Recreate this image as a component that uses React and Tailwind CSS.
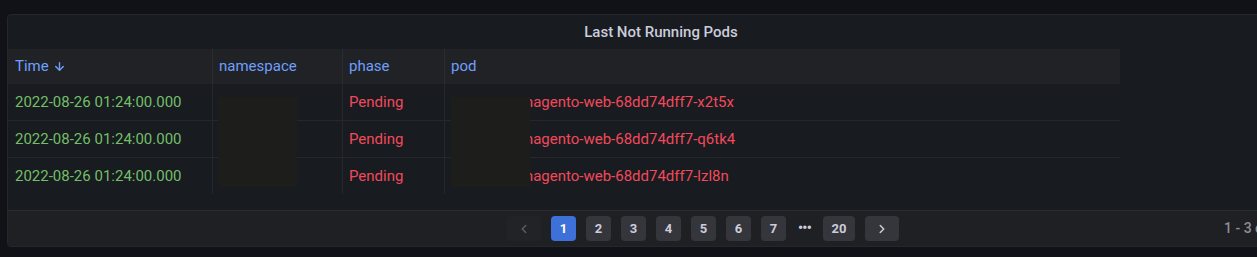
import { ArrowDown, ChevronLeft, ChevronRight } from 'lucide-react';

const rows = [
  { time: '2022-08-26 01:24:00.000', phase: 'Pending', pod: 'magento-web-68dd74dff7-x2t5x' },
  { time: '2022-08-26 01:24:00.000', phase: 'Pending', pod: 'magento-web-68dd74dff7-q6tk4' },
  { time: '2022-08-26 01:24:00.000', phase: 'Pending', pod: 'magento-web-68dd74dff7-lzl8n' },
];

const pages = ['1', '2', '3', '4', '5', '6', '7'];

function PageButton({ label, active }) {
  return (
    <div
      className={
        active
          ? 'flex h-[25px] w-[25px] items-center justify-center rounded-sm bg-[#3d71d9] text-[13px] font-bold text-white'
          : 'flex h-[25px] w-[25px] items-center justify-center rounded-sm bg-[#35363b] text-[13px] font-bold text-[#ccccdc]'
      }
    >
      {label}
    </div>
  );
}

export default function App() {
  return (
    <div
      className="h-[257px] w-[1257px] overflow-hidden bg-[#111217] pl-[7px] pt-[14px]"
      style={{ fontFamily: 'Roboto, "Liberation Sans", sans-serif' }}
    >
      <div className="flex h-[233px] w-[1308px] flex-col rounded border border-[#24262b] bg-[#181b1f]">
        <div className="flex h-[34px] shrink-0 items-center justify-center text-[15px] font-medium text-[#ccccdc]">
          Last Not Running Pods
        </div>

        <div className="relative h-[161px] w-[1112px] shrink-0">
          {/* header */}
          <div className="flex h-[35px] bg-[#212226] text-[15px] text-[#6e9fff]">
            <div className="flex w-[205px] items-center gap-1 border-r border-[#2a2c31] pl-[7px]">
              Time <ArrowDown size={13} strokeWidth={2.5} />
            </div>
            <div className="flex w-[130px] items-center border-r border-[#2a2c31] pl-[6px]">namespace</div>
            <div className="flex w-[102px] items-center border-r border-[#2a2c31] pl-[6px]">phase</div>
            <div className="flex flex-1 items-center pl-[6px]">pod</div>
          </div>

          {rows.map((row, i) => (
            <div
              key={row.pod}
              className={
                i < rows.length - 1
                  ? 'flex h-[37px] border-b border-[#25272c] text-[15px]'
                  : 'flex h-[36px] text-[15px]'
              }
            >
              <div className="flex w-[205px] items-center border-r border-[#25272c] pl-[7px] text-[#73bf69]">
                {row.time}
              </div>
              <div className="w-[130px] border-r border-[#25272c]" />
              <div className="flex w-[102px] items-center border-r border-[#25272c] pl-[6px] text-[#f2495c]">
                {row.phase}
              </div>
              <div className="flex flex-1 items-center pl-[75px] text-[#f2495c]">{row.pod}</div>
            </div>
          ))}

          {/* redacted blocks */}
          <div className="absolute left-[210px] top-[48px] h-[90px] w-[79px] bg-[#1d1e1b]" />
          <div className="absolute left-[443px] top-[48px] h-[90px] w-[79px] bg-[#1d1e1b]" />
        </div>

        <div className="flex flex-1 items-center border-t border-[#2a2c31] bg-[#1f2024] pl-[499px]">
          <div className="flex items-center gap-[10px]">
            <div className="flex h-[25px] w-[34px] items-center justify-center rounded-sm bg-[#222327] text-[#5b5d63]">
              <ChevronLeft size={14} strokeWidth={2.5} />
            </div>
            {pages.map((p) => (
              <PageButton key={p} label={p} active={p === '1'} />
            ))}
            <div className="flex w-[17px] items-center justify-center text-[14px] font-bold tracking-tighter text-[#ccccdc]">
              •••
            </div>
            <div className="flex h-[25px] w-[32px] items-center justify-center rounded-sm bg-[#35363b] text-[13px] font-bold text-[#ccccdc]">
              20
            </div>
            <div className="flex h-[25px] w-[34px] items-center justify-center rounded-sm bg-[#35363b] text-[#ccccdc]">
              <ChevronRight size={14} strokeWidth={2.5} />
            </div>
          </div>
          <div className="ml-[325px] text-[14px] font-medium text-[#8e8e95]">1 - 3 of 3 rows</div>
        </div>
      </div>
    </div>
  );
}
